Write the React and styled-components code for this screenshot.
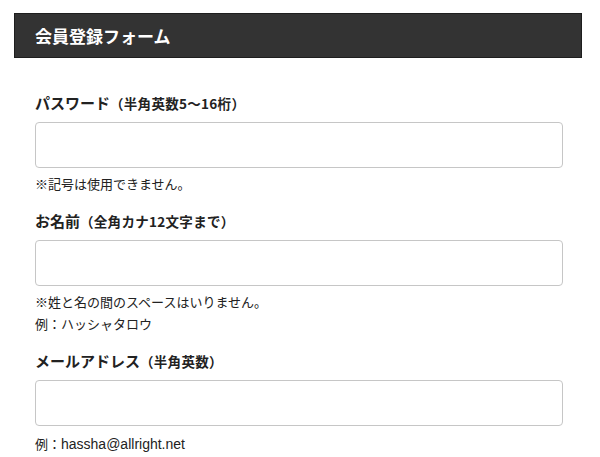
import React from 'react'
import styled, { createGlobalStyle } from 'styled-components'

const Global = createGlobalStyle`
  body {
    margin: 0;
    background: #fff;
    font-family: "Noto Sans CJK JP", "Noto Sans", sans-serif;
    color: #222;
  }
`

const Page = styled.div`
  width: 600px;
  height: 457px;
  overflow: hidden;
  padding-top: 13px;
  box-sizing: border-box;
`

const Header = styled.h1`
  margin: 0 18px 0 14px;
  height: 45px;
  box-sizing: border-box;
  background: #333;
  border: 1px solid #1e1e1e;
  color: #fff;
  font-size: 17px;
  font-weight: 700;
  display: flex;
  align-items: center;
  padding: 0 0 1px 20px;
`

const Form = styled.form`
  padding: 35px 37px 0 35px;
`

const Field = styled.div`
  margin-bottom: ${p => p.gap || 16}px;
`

const Label = styled.label`
  display: flex;
  align-items: baseline;
  height: 20px;
  font-size: 15px;
  font-weight: 700;
  line-height: 20px;
  margin-bottom: 9px;
  color: #222;
`

const Sub = styled.span`
  font-size: 13.5px;
  letter-spacing: 0.3px;
`

const Input = styled.input`
  display: block;
  width: 100%;
  height: 46px;
  box-sizing: border-box;
  border: 1px solid #c6c6c6;
  border-radius: 4px;
  background: #fff;
  outline: none;
`

const Note = styled.p`
  margin: 0;
  font-size: 13px;
  line-height: 22px;
  color: #222;
  &:first-of-type {
    margin-top: ${p => p.top || 5}px;
  }
`

const Example = styled.span`
  font-family: "Liberation Sans", "Noto Sans CJK JP", sans-serif;
  font-size: 14px;
`

export default function App() {
  return (
    <Page>
      <Global />
      <Header>会員登録フォーム</Header>
      <Form>
        <Field gap={16}>
          <Label>パスワード<Sub>（半角英数5〜16桁）</Sub></Label>
          <Input type="password" />
          <Note>※記号は使用できません。</Note>
        </Field>
        <Field gap={16}>
          <Label>お名前<Sub>（全角カナ12文字まで）</Sub></Label>
          <Input type="text" />
          <Note>※姓と名の間のスペースはいりません。</Note>
          <Note>例：ハッシャタロウ</Note>
        </Field>
        <Field>
          <Label>メールアドレス<Sub>（半角英数）</Sub></Label>
          <Input type="text" />
          <Note top={7}>例：<Example>hassha@allright.net</Example></Note>
        </Field>
      </Form>
    </Page>
  )
}
